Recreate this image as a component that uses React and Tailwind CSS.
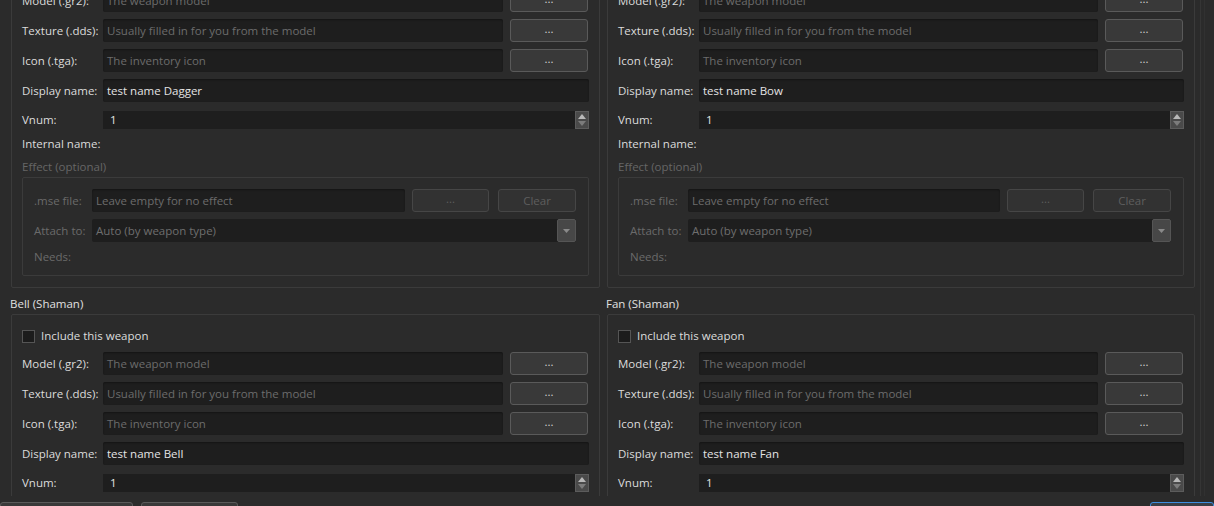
import React from 'react';

const font = { fontFamily: '"Open Sans", "Noto Sans", sans-serif' };

const weapons = [
    { title: 'Dagger (Assassin)', name: 'test name Dagger', checked: true, effect: true },
    { title: 'Bow (Assassin)', name: 'test name Bow', checked: true, effect: true },
    { title: 'Bell (Shaman)', name: 'test name Bell', checked: false, effect: false },
    { title: 'Fan (Shaman)', name: 'test name Fan', checked: false, effect: false },
];

const TextBox = ({ placeholder, value, disabled, className = '' }) => (
    <div className={`h-[23px] flex items-center px-[4px] rounded-[2px] bg-[#1e1e1e] shadow-[inset_0_1px_2px_rgba(0,0,0,0.35)] ${className}`}>
        {value ? (
            <span className={disabled ? 'text-[#6e6e6e]' : 'text-[#e4e4e4]'}>{value}</span>
        ) : (
            <span className="text-[#6c6c6c]">{placeholder}</span>
        )}
    </div>
);

const PushButton = ({ children, disabled, className = '' }) => (
    <div
        className={`h-[23px] flex items-center justify-center rounded-[3px] border ${
            disabled
                ? 'bg-[#323232] border-[#464646] text-[#5e5e5e]'
                : 'bg-[#393939] border-[#5a5a5a] text-[#cfcfcf]'
        } ${className}`}
    >
        {children}
    </div>
);

const FileRow = ({ label, placeholder }) => (
    <div className="flex items-center h-[23px]">
        <span className="w-[81px] shrink-0 text-[#dcdcdc]">{label}</span>
        <TextBox placeholder={placeholder} className="flex-1" />
        <PushButton className="w-[78px] ml-[7px] leading-none pb-[4px]">...</PushButton>
    </div>
);

const SpinBox = () => (
    <div className="flex items-center h-[18px]">
        <span className="w-[81px] shrink-0 text-[#dcdcdc]">Vnum:</span>
        <div className="flex-1 h-[18px] flex bg-[#1e1e1e]">
            <span className="flex-1 pl-[7px] text-[#e4e4e4] leading-[18px]">1</span>
            <div className="w-[14px] h-[18px] bg-[#4a4a4a] border border-[#5c5c5c] flex flex-col items-center justify-center gap-[2px]">
                <svg width="8" height="5" viewBox="0 0 8 5"><path d="M0 5 L4 0 L8 5 Z" fill="#b8b8b8" /></svg>
                <svg width="8" height="5" viewBox="0 0 8 5"><path d="M0 0 L4 5 L8 0 Z" fill="#7c7c7c" /></svg>
            </div>
        </div>
    </div>
);

const EffectBox = () => (
    <div className="mt-[2px] mr-[-1px] border border-[#3b3b3b] rounded-[2px] pl-[11px] pr-[12px] pt-[11px] pb-[10px] text-[#6a6a6a]">
        <div className="flex items-center h-[23px]">
            <span className="w-[58px] shrink-0">.mse file:</span>
            <TextBox placeholder="Leave empty for no effect" className="flex-1" />
            <PushButton disabled className="w-[77px] ml-[7px] leading-none pb-[4px]">...</PushButton>
            <PushButton disabled className="w-[78px] ml-[9px]">Clear</PushButton>
        </div>
        <div className="flex items-center h-[23px] mt-[7px]">
            <span className="w-[58px] shrink-0">Attach to:</span>
            <div className="flex-1 h-[23px] flex bg-[#1e1e1e] rounded-[2px]">
                <span className="flex-1 pl-[4px] leading-[23px] text-[#6e6e6e]">Auto (by weapon type)</span>
                <div className="w-[19px] h-[23px] bg-[#474747] border border-[#555555] rounded-[2px] flex items-center justify-center">
                    <svg width="7" height="4" viewBox="0 0 7 4"><path d="M0 0 L3.5 4 L7 0 Z" fill="#8a8a8a" /></svg>
                </div>
            </div>
        </div>
        <div className="h-[16px] mt-[7px] flex items-center">Needs:</div>
    </div>
);

const WeaponGroup = ({ weapon }) => (
    <div className="flex flex-col">
        <div className="h-[16px] flex items-center text-[#e0e0e0]">{weapon.title}</div>
        <div className="mt-[2px] ml-[1px] border border-[#3b3b3b] rounded-[2px] pl-[10px] pr-[11px] pt-[13px] pb-[11px]">
            <div className="h-[16px] flex items-center">
                <div className="w-[13px] h-[13px] border border-[#555555] bg-[#1c1c1c] flex items-center justify-center">
                    {weapon.checked && (
                        <svg width="9" height="9" viewBox="0 0 9 9"><path d="M1 4.5 L3.5 7 L8 1.5" stroke="#d8d8d8" strokeWidth="1.5" fill="none" /></svg>
                    )}
                </div>
                <span className="ml-[6px] text-[#dcdcdc]">Include this weapon</span>
            </div>
            <div className="mt-[8px] flex flex-col gap-[7px]">
                <FileRow label="Model (.gr2):" placeholder="The weapon model" />
                <FileRow label="Texture (.dds):" placeholder="Usually filled in for you from the model" />
                <FileRow label="Icon (.tga):" placeholder="The inventory icon" />
                <div className="flex items-center h-[23px] mr-[-1px]">
                    <span className="w-[81px] shrink-0 text-[#dcdcdc]">Display name:</span>
                    <TextBox value={weapon.name} className="flex-1" />
                </div>
            </div>
            <div className="mt-[9px] mr-[-1px]">
                <SpinBox />
            </div>
            {weapon.effect && (
                <>
                    <div className="h-[16px] mt-[7px] flex items-center text-[#dcdcdc]">Internal name:</div>
                    <div className="h-[16px] mt-[7px] flex items-center text-[#666666]">Effect (optional)</div>
                    <EffectBox />
                </>
            )}
        </div>
    </div>
);

export default function App() {
    return (
        <div className="w-[1214px] h-[506px] bg-[#2b2b2b] overflow-hidden flex flex-col text-[11.5px]" style={font}>
            {/* Scroll area */}
            <div className="h-[496px] shrink-0 flex overflow-hidden">
                <div className="flex-1 overflow-hidden border-r border-[#353535]">
                    <div className="-mt-[67px] pl-[10px] grid grid-cols-[590px_589px] gap-x-[6px] gap-y-[8px]">
                        {weapons.map((w) => (
                            <WeaponGroup key={w.title} weapon={w} />
                        ))}
                    </div>
                </div>
                <div className="w-[10px] border-l border-[#313131] ml-[3px]" />
            </div>

            {/* Dialog buttons */}
            <div className="flex-1 flex items-start pt-[6px]">
                <div className="w-[133px] h-[24px] rounded-[3px] border border-[#5a5a5a] bg-[#393939]" />
                <div className="w-[97px] h-[24px] ml-[8px] rounded-[3px] border border-[#5a5a5a] bg-[#393939]" />
                <div className="flex-1" />
                <div className="w-[64px] h-[24px] rounded-[3px] border border-[#3d8ee0] bg-[#3a3f46]" />
            </div>
        </div>
    );
}
